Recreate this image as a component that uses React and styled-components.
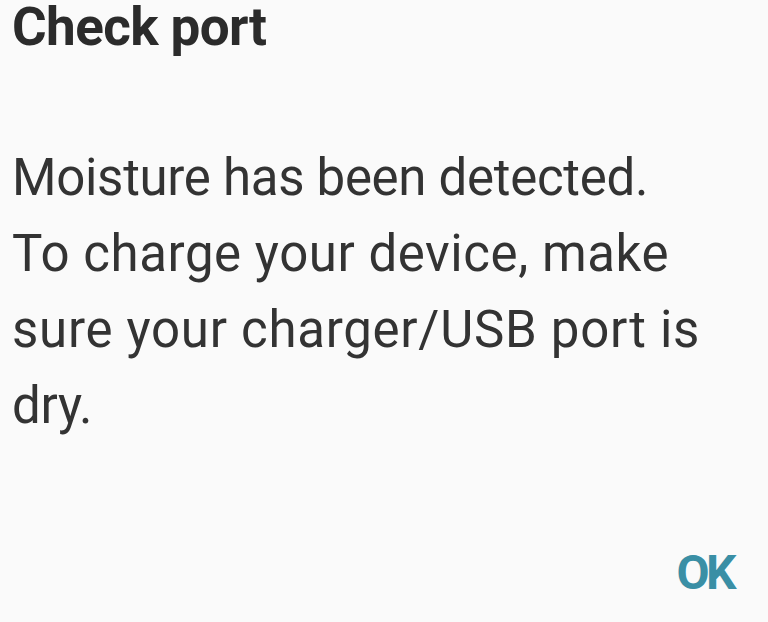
import React from 'react';
import styled, { createGlobalStyle } from 'styled-components';

const GlobalStyle = createGlobalStyle`
	html, body {
		margin: 0;
		padding: 0;
		background: #fafafa;
	}
	body {
		font-family: 'Roboto', 'Liberation Sans', sans-serif;
	}
`;

const Dialog = styled.div`
	display: flex;
	flex-direction: column;
	width: 768px;
	height: 622px;
	box-sizing: border-box;
	padding: 0 33px 0 12px;
	background: #fafafa;
	overflow: hidden;
`;

const Title = styled.h1`
	margin: 0;
	font-size: 53px;
	line-height: 54px;
	font-weight: 700;
	color: #2b2b2b;
	letter-spacing: -0.6px;
`;

const Message = styled.div`
	padding-top: 86px;
	font-size: 51px;
	line-height: 76px;
	font-weight: 400;
	color: #333333;
`;

const Line = styled.div`
	white-space: nowrap;
	letter-spacing: ${props => props.spread || '-0.3px'};
`;

const Actions = styled.div`
	display: flex;
	justify-content: flex-end;
	margin-top: auto;
	padding-bottom: 25px;
`;

const TextButton = styled.button`
	border: none;
	background: none;
	padding: 0 2px 0 0;
	font-family: inherit;
	font-size: 48px;
	line-height: 48px;
	font-weight: 700;
	color: ${props => props.color || '#3a8fa5'};
	letter-spacing: -3.5px;
`;

export default function App() {
	return (
		<>
			<GlobalStyle />
			<Dialog>
				<Title>Check port</Title>
				<Message>
					<Line>Moisture has been detected.</Line>
					<Line spread="0.55px">To charge your device, make</Line>
					<Line spread="0.72px">sure your charger/USB port is</Line>
					<Line>dry.</Line>
				</Message>
				<Actions>
					<TextButton>OK</TextButton>
				</Actions>
			</Dialog>
		</>
	);
}
